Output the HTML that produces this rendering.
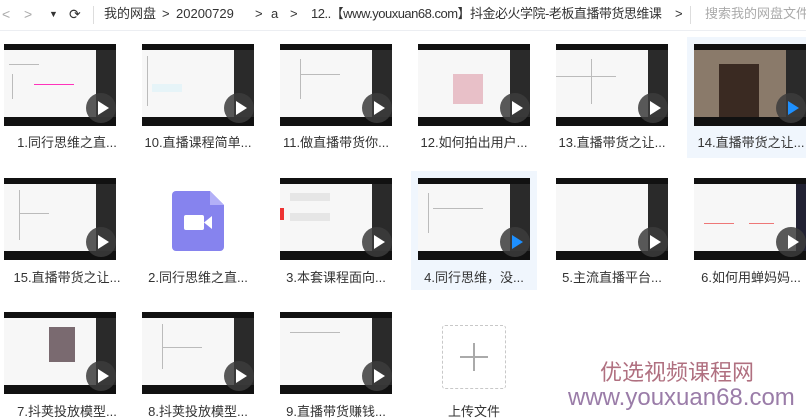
<!DOCTYPE html>
<html><head><meta charset="utf-8"><style>
*{margin:0;padding:0;box-sizing:border-box}
body{width:806px;height:415px;overflow:hidden;background:#fff;font-family:"Liberation Sans","Noto Sans CJK SC",sans-serif;color:#333;position:relative}
.top{position:absolute;left:0;top:0;width:806px;height:31px;border-bottom:1px solid #eceef2;font-size:13px;color:#333}
.top span{position:absolute;top:3px;white-space:nowrap;line-height:22px;height:22px}
.g{color:#aaa}
.sel{position:absolute;background:#f0f6fd}
.th{position:absolute;width:112px;height:82px;background:#111;overflow:hidden}
.th .s{position:absolute;left:0;top:6px;width:112px;height:67px;background:#f7f7f7}
.th .d{position:absolute;right:0;top:6px;width:20px;height:67px;background:#2a2a2a}
.th .l{position:absolute;background:#bbb;height:1px}
.th .p{position:absolute;left:82px;top:49px;width:30px;height:30px;border-radius:50%;background:rgba(60,60,60,.85)}
.th .p:after{content:"";position:absolute;left:12px;top:8px;border-left:11px solid #fff;border-top:7px solid transparent;border-bottom:7px solid transparent}
.th .p.b:after{border-left-color:#1e90ff}
.lab{position:absolute;width:138px;text-align:center;font-size:13px;color:#333;white-space:nowrap}
</style></head><body>
<div class="top">
<span class="g" style="left:2px;font-size:14px">&lt;</span>
<span class="g" style="left:24px;font-size:14px">&gt;</span>
<span style="left:49px;font-size:9px">▼</span>
<span style="left:69px;font-size:14px">⟳</span>
<span style="left:93px;top:6px;width:1px;height:18px;background:#ddd"></span>
<span style="left:104px">我的网盘</span>
<span style="left:162px">&gt;</span>
<span style="left:176px">20200729</span>
<span style="left:255px">&gt;</span>
<span style="left:271px">a</span>
<span style="left:290px">&gt;</span>
<span style="left:311px;letter-spacing:-0.5px">12..【www.youxuan68.com】抖金必火学院-老板直播带货思维课</span>
<span style="left:675px">&gt;</span>
<span style="left:690px;top:6px;width:1px;height:18px;background:#ddd"></span>
<span class="g" style="left:705px">搜索我的网盘文件</span>
</div>
<div class="sel" style="left:687px;top:37px;width:119px;height:121px"></div>
<div class="sel" style="left:411px;top:171px;width:126px;height:119px"></div>

<!-- row1 -->
<div class="th" style="left:4px;top:44px"><div class="s"></div><div class="d"></div><div class="l" style="left:5px;top:20px;width:30px"></div><div class="l" style="left:30px;top:40px;width:40px;background:#f3b"></div><div class="l" style="left:8px;top:30px;width:1px;height:25px"></div><div class="p"></div></div>
<div class="th" style="left:142px;top:44px"><div class="s"></div><div class="d"></div><div class="l" style="left:5px;top:12px;width:1px;height:50px"></div><div class="l" style="left:10px;top:40px;width:30px;height:8px;background:#e6f4f8"></div><div class="p"></div></div>
<div class="th" style="left:280px;top:44px"><div class="s"></div><div class="d"></div><div class="l" style="left:20px;top:15px;width:1px;height:40px"></div><div class="l" style="left:20px;top:30px;width:40px"></div><div class="p"></div></div>
<div class="th" style="left:418px;top:44px"><div class="s"></div><div class="d"></div><div class="l" style="left:35px;top:30px;width:30px;height:30px;background:#e8c0c8"></div><div class="p"></div></div>
<div class="th" style="left:556px;top:44px"><div class="s"></div><div class="d"></div><div class="l" style="left:35px;top:15px;width:1px;height:45px"></div><div class="l" style="left:0;top:32px;width:60px"></div><div class="p"></div></div>
<div class="th" style="left:694px;top:44px"><div class="s" style="background:#8a7a6a"></div><div class="l" style="left:25px;top:20px;width:40px;height:53px;background:#3a2a22"></div><div class="d"></div><div class="p b"></div></div>
<div class="lab" style="left:-2px;top:132px">1.同行思维之直...</div>
<div class="lab" style="left:129px;top:132px">10.直播课程简单...</div>
<div class="lab" style="left:267px;top:132px">11.做直播带货你...</div>
<div class="lab" style="left:405px;top:132px">12.如何拍出用户...</div>
<div class="lab" style="left:543px;top:132px">13.直播带货之让...</div>
<div class="lab" style="left:682px;top:132px">14.直播带货之让...</div>

<!-- row2 -->
<div class="th" style="left:4px;top:178px"><div class="s"></div><div class="d"></div><div class="l" style="left:15px;top:12px;width:1px;height:50px"></div><div class="l" style="left:15px;top:35px;width:30px"></div><div class="p"></div></div>
<svg style="position:absolute;left:172px;top:191px" width="52" height="60" viewBox="0 0 52 60"><path d="M4 0H38L52 14V56a4 4 0 0 1-4 4H4a4 4 0 0 1-4-4V4a4 4 0 0 1 4-4z" fill="#8683ee"/><path d="M38 0V14H52z" fill="#b3b0f7"/><rect x="12" y="24" width="20" height="15" rx="2" fill="#fff"/><path d="M32 31.5L40 25V38z" fill="#fff"/></svg>
<div class="th" style="left:280px;top:178px"><div class="s"></div><div class="d"></div><div class="l" style="left:0;top:30px;width:4px;height:12px;background:#e33"></div><div class="l" style="left:10px;top:15px;width:40px;height:8px;background:#e6e6e6"></div><div class="l" style="left:10px;top:35px;width:40px;height:8px;background:#e6e6e6"></div><div class="p"></div></div>
<div class="th" style="left:418px;top:178px"><div class="s"></div><div class="d"></div><div class="l" style="left:10px;top:15px;width:1px;height:40px"></div><div class="l" style="left:15px;top:30px;width:50px"></div><div class="p b"></div></div>
<div class="th" style="left:556px;top:178px"><div class="s"></div><div class="d"></div><div class="p"></div></div>
<div class="th" style="left:694px;top:178px"><div class="s"></div><div class="d" style="width:10px;background:#223"></div><div class="l" style="left:10px;top:45px;width:30px;background:#e77"></div><div class="l" style="left:55px;top:45px;width:25px;background:#e77"></div><div class="p"></div></div>
<div class="lab" style="left:-2px;top:267px">15.直播带货之让...</div>
<div class="lab" style="left:129px;top:267px">2.同行思维之直...</div>
<div class="lab" style="left:267px;top:267px">3.本套课程面向...</div>
<div class="lab" style="left:405px;top:267px">4.同行思维，没...</div>
<div class="lab" style="left:543px;top:267px">5.主流直播平台...</div>
<div class="lab" style="left:682px;top:267px">6.如何用蝉妈妈...</div>

<!-- row3 -->
<div class="th" style="left:4px;top:312px"><div class="s"></div><div class="d"></div><div class="l" style="left:45px;top:15px;width:26px;height:35px;background:#7a6a70"></div><div class="p"></div></div>
<div class="th" style="left:142px;top:312px"><div class="s"></div><div class="d"></div><div class="l" style="left:20px;top:12px;width:1px;height:45px"></div><div class="l" style="left:20px;top:35px;width:40px"></div><div class="p"></div></div>
<div class="th" style="left:280px;top:312px"><div class="s"></div><div class="d"></div><div class="l" style="left:10px;top:20px;width:50px"></div><div class="p"></div></div>
<div style="position:absolute;left:442px;top:325px;width:64px;height:64px;border:1px dashed #c8c8c8;border-radius:3px"></div>
<div style="position:absolute;left:460px;top:356px;width:28px;height:1.5px;background:#aaa"></div>
<div style="position:absolute;left:473px;top:343px;width:1.5px;height:28px;background:#aaa"></div>
<div class="lab" style="left:-2px;top:401px">7.抖荚投放模型...</div>
<div class="lab" style="left:129px;top:401px">8.抖荚投放模型...</div>
<div class="lab" style="left:267px;top:401px">9.直播带货赚钱...</div>
<div class="lab" style="left:405px;top:401px">上传文件</div>

<div style="position:absolute;left:600px;top:355px;font-size:22px;color:#b07080;white-space:nowrap">优选视频课程网</div>
<div style="position:absolute;left:568px;top:384px;font-size:24px;color:#9a7ca8;white-space:nowrap">www.youxuan68.com</div>
</body></html>
